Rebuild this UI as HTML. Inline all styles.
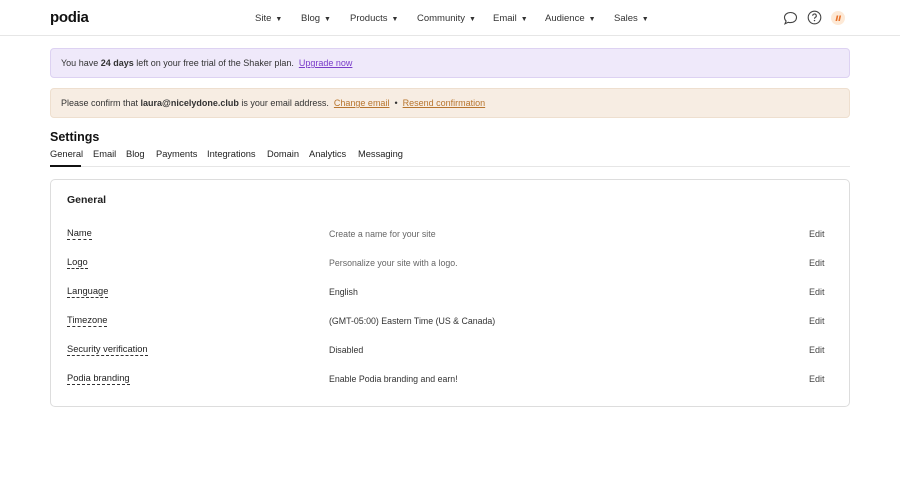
<!DOCTYPE html>
<html><head><style>
*{margin:0;padding:0;box-sizing:border-box}
body{width:900px;height:484px;background:#fff;font-family:"Liberation Sans",Arial,sans-serif;color:#222;font-size:9px;position:relative;overflow:hidden}
.a{position:absolute;white-space:nowrap}
.hdr{position:absolute;left:0;top:0;width:900px;height:36px;border-bottom:1px solid #e6e6e6}
.logo{left:50px;top:9px;font-size:15px;font-weight:bold;color:#111;letter-spacing:-0.3px}
.nav{top:13px;font-size:9.5px;color:#333}
.nav i{font-style:normal;font-size:7px;margin-left:4px}
.ban{position:absolute;left:50px;width:800px;height:30px;border-radius:4px;padding:9px 10px;font-size:9px;color:#333}
.b1{top:48px;background:#efe9fa;border:1px solid #ddd2f2}
.b2{top:88px;background:#f7ede3;border:1px solid #eedfcf}
.b1 a{color:#7a3cc9}
.b2 a{color:#b8752e}
a{text-decoration:underline}
.tabs span{position:absolute;top:149px;font-size:9.3px;color:#222}
.card{position:absolute;left:50px;top:179px;width:800px;height:228px;border:1px solid #ddd;border-radius:5px}
.lbl{left:67px;font-size:9.3px;color:#222;border-bottom:1px dashed #333;line-height:11px}
.val{left:329px;font-size:8.8px;color:#333}
.ed{left:809px;font-size:9px;color:#444}
</style></head><body>
<div class="hdr"></div>
<div class="a logo">podia</div>
<div class="a nav" style="left:255px">Site<i>▼</i></div>
<div class="a nav" style="left:301px">Blog<i>▼</i></div>
<div class="a nav" style="left:350px">Products<i>▼</i></div>
<div class="a nav" style="left:417px">Community<i>▼</i></div>
<div class="a nav" style="left:493px">Email<i>▼</i></div>
<div class="a nav" style="left:545px">Audience<i>▼</i></div>
<div class="a nav" style="left:614px">Sales<i>▼</i></div>
<svg class="a" style="left:783px;top:11px" width="15" height="14" viewBox="0 0 15 14"><path d="M7.5 1.5C4 1.5 1.5 3.7 1.5 6.5c0 1.4.6 2.6 1.6 3.5L2 12.8l3.2-1.5c.7.2 1.5.3 2.3.3 3.5 0 6-2.2 6-5.1S11 1.5 7.5 1.5z" fill="none" stroke="#444" stroke-width="1.1"/></svg>
<svg class="a" style="left:807px;top:10px" width="15" height="15" viewBox="0 0 15 15"><circle cx="7.5" cy="7.5" r="6.3" fill="none" stroke="#444" stroke-width="1.1"/><path d="M5.7 5.8a1.8 1.8 0 1 1 2.6 1.6c-.6.3-.8.7-.8 1.3" fill="none" stroke="#444" stroke-width="1.1"/><circle cx="7.5" cy="10.6" r=".7" fill="#444"/></svg>
<svg class="a" style="left:831px;top:11px" width="14" height="14" viewBox="0 0 14 14"><circle cx="7" cy="7" r="7" fill="#fde9d6"/><path d="M4.5 10l1.2-5.5h1.6L6.1 10zM7.3 10l1.2-5.5h1.6L8.9 10z" fill="#e8712a"/></svg>
<div class="ban b1">You have <b>24 days</b> left on your free trial of the Shaker plan. &nbsp;<a>Upgrade now</a></div>
<div class="ban b2">Please confirm that <b>laura@nicelydone.club</b> is your email address. &nbsp;<a>Change email</a> &nbsp;•&nbsp; <a>Resend confirmation</a></div>
<div class="a" style="left:50px;top:130px;font-size:12.5px;font-weight:bold;color:#111">Settings</div>
<div class="tabs">
<span style="left:50px">General</span><span style="left:93px">Email</span><span style="left:126px">Blog</span><span style="left:156px">Payments</span><span style="left:207px">Integrations</span><span style="left:267px">Domain</span><span style="left:309px">Analytics</span><span style="left:358px">Messaging</span>
</div>
<div class="a" style="left:50px;top:166px;width:800px;height:1px;background:#e6e6e6"></div>
<div class="a" style="left:50px;top:165px;width:31px;height:2px;background:#111"></div>
<div class="card"></div>
<div class="a" style="left:67px;top:194px;font-size:10.5px;font-weight:bold;color:#222">General</div>
<div class="a lbl" style="top:228px">Name</div><div class="a val" style="top:229px;color:#666">Create a name for your site</div><div class="a ed" style="top:229px">Edit</div>
<div class="a lbl" style="top:257px">Logo</div><div class="a val" style="top:258px;color:#666">Personalize your site with a logo.</div><div class="a ed" style="top:258px">Edit</div>
<div class="a lbl" style="top:286px">Language</div><div class="a val" style="top:287px">English</div><div class="a ed" style="top:287px">Edit</div>
<div class="a lbl" style="top:315px">Timezone</div><div class="a val" style="top:316px">(GMT-05:00) Eastern Time (US &amp; Canada)</div><div class="a ed" style="top:316px">Edit</div>
<div class="a lbl" style="top:344px">Security verification</div><div class="a val" style="top:345px">Disabled</div><div class="a ed" style="top:345px">Edit</div>
<div class="a lbl" style="top:373px">Podia branding</div><div class="a val" style="top:374px">Enable Podia branding and earn!</div><div class="a ed" style="top:374px">Edit</div>
</body></html>
